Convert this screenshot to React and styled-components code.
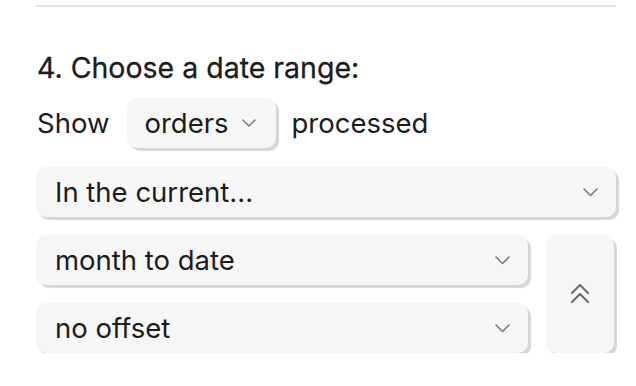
import React from 'react';
import styled, { createGlobalStyle } from 'styled-components';

const GlobalStyle = createGlobalStyle`
  body {
    margin: 0;
    background: #ffffff;
    font-family: Inter, "Noto Sans", sans-serif;
    color: #1c1c1c;
  }
`;

const Panel = styled.div`
  width: 580px;
  margin: 5px 0 0 36px;
  border-top: 2px solid #e2e2e2;
  display: flex;
  flex-direction: column;
`;

const Heading = styled.h2`
  margin: 44px 0 0 1px;
  font-size: 28.5px;
  font-weight: 400;
  line-height: 34px;
  -webkit-text-stroke: 0.3px #1c1c1c;
`;

const Sentence = styled.div`
  display: flex;
  align-items: center;
  margin-top: 13px;
  font-size: 27.5px;
  line-height: 34px;
`;

const Word = styled.span`
  margin: 0 ${p => p.$right || 0}px 0 ${p => p.$left || 0}px;
`;

const Pill = styled.div`
  display: flex;
  align-items: center;
  gap: 13px;
  height: 50px;
  padding: 0 20px 0 17px;
  box-sizing: border-box;
  background: #f6f6f6;
  border-radius: 10px;
  box-shadow: 3px 3px 1px rgba(0, 0, 0, 0.16);
`;

const Select = styled.div`
  display: flex;
  align-items: center;
  justify-content: space-between;
  height: 50px;
  padding: 0 18px 0 19px;
  box-sizing: border-box;
  background: #f6f6f6;
  border-radius: 10px;
  box-shadow: 3px 3px 1px rgba(0, 0, 0, 0.16);
  font-size: 27.5px;
  width: ${p => p.$width || 'auto'};
`;

const Stack = styled.div`
  display: flex;
  flex-direction: column;
  gap: 18px;
  margin-top: ${p => p.$top || 0}px;
`;

const Row = styled.div`
  display: flex;
  gap: 18px;
`;

const StepButton = styled.button`
  width: 68px;
  border: none;
  background: #f6f6f6;
  border-radius: 10px;
  box-shadow: 3px 3px 1px rgba(0, 0, 0, 0.16);
  display: flex;
  align-items: center;
  justify-content: center;
  padding: 0;
`;

const Chevron = ({ size = 15 }) => (
  <svg width={size} height={size * 0.6} viewBox="0 0 15 9" fill="none">
    <polyline points="1,1 7.5,7.5 14,1" stroke="#7a7a7a" strokeWidth="1.6" strokeLinecap="round" strokeLinejoin="round" />
  </svg>
);

const DoubleChevronUp = () => (
  <svg width="20" height="22" viewBox="0 0 20 22" fill="none">
    <polyline points="2,10 10,2 18,10" stroke="#6f6f6f" strokeWidth="2.2" strokeLinecap="round" strokeLinejoin="round" />
    <polyline points="2,19 10,11 18,19" stroke="#6f6f6f" strokeWidth="2.2" strokeLinecap="round" strokeLinejoin="round" />
  </svg>
);

export default function App() {
  return (
    <>
      <GlobalStyle />
      <Panel>
        <Heading>4. Choose a date range:</Heading>
        <Sentence>
          <Word $left={1} $right={18}>Show</Word>
          <Pill>
            <span>orders</span>
            <Chevron size={14} />
          </Pill>
          <Word $left={16}>processed</Word>
        </Sentence>
        <Stack $top={19}>
          <Select>
            <span>In the current...</span>
            <Chevron />
          </Select>
          <Row>
            <Stack>
              <Select $width="492px">
                <span>month to date</span>
                <Chevron />
              </Select>
              <Select $width="492px">
                <span>no offset</span>
                <Chevron />
              </Select>
            </Stack>
            <StepButton>
              <DoubleChevronUp />
            </StepButton>
          </Row>
        </Stack>
      </Panel>
    </>
  );
}
